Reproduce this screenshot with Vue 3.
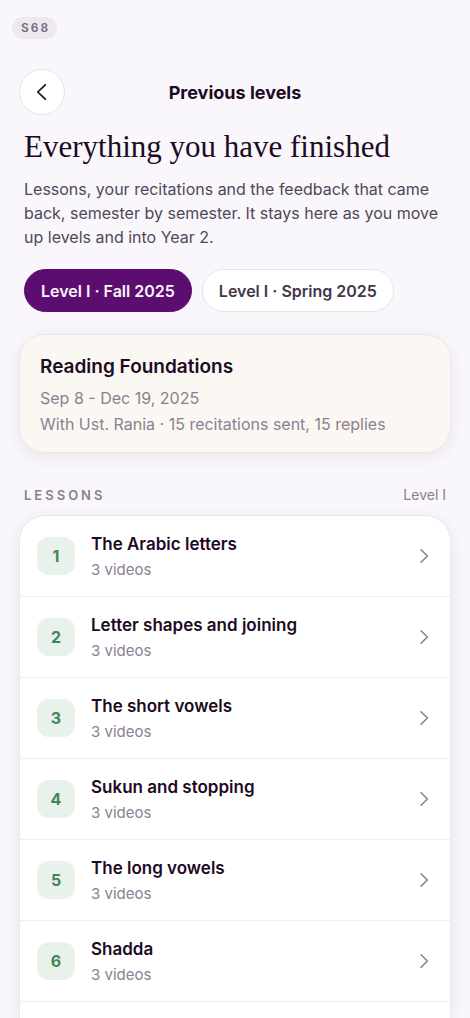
<script setup>
import { ref } from 'vue'

const terms = ['Level I · Fall 2025', 'Level I · Spring 2025']
const activeTerm = ref(terms[0])

const lessons = [
    { id: 1, title: 'The Arabic letters', videos: 3 },
    { id: 2, title: 'Letter shapes and joining', videos: 3 },
    { id: 3, title: 'The short vowels', videos: 3 },
    { id: 4, title: 'Sukun and stopping', videos: 3 },
    { id: 5, title: 'The long vowels', videos: 3 },
    { id: 6, title: 'Shadda', videos: 3 },
]
</script>

<template>
    <div class="page">
        <span class="screen-tag">S68</span>

        <header class="top-bar">
            <button type="button" class="back-btn" aria-label="Back">
                <svg width="24" height="24" viewBox="0 0 24 24" fill="none">
                    <path d="M15.3 4.8 7.8 12l7.5 7.2" stroke="currentColor" stroke-width="1.7" stroke-linecap="round"
                        stroke-linejoin="round" />
                </svg>
            </button>
            <h2>Previous levels</h2>
        </header>

        <section class="intro">
            <h1>Everything you have finished</h1>
            <p>
                Lessons, your recitations and the feedback that came back, semester by semester. It stays here as you
                move up levels and into Year 2.
            </p>
            <div class="terms">
                <button v-for="term in terms" :key="term" type="button" class="term"
                    :class="{ active: term === activeTerm }" @click="activeTerm = term">
                    {{ term }}
                </button>
            </div>
        </section>

        <section class="summary">
            <h3>Reading Foundations</h3>
            <p>Sep 8 - Dec 19, 2025</p>
            <p>With Ust. Rania · 15 recitations sent, 15 replies</p>
        </section>

        <div class="list-head">
            <h4>LESSONS</h4>
            <span>Level I</span>
        </div>

        <!-- lessons -->
        <ul class="lessons">
            <li v-for="lesson in lessons" :key="lesson.id">
                <a href="#" class="lesson">
                    <span class="number">{{ lesson.id }}</span>
                    <span class="info">
                        <strong>{{ lesson.title }}</strong>
                        <small>{{ lesson.videos }} videos</small>
                    </span>
                    <svg width="18" height="18" viewBox="0 0 18 18" fill="none">
                        <path d="m6 2.8 6.4 6.2L6 15.2" stroke="currentColor" stroke-width="1.6"
                            stroke-linecap="round" stroke-linejoin="round" />
                    </svg>
                </a>
            </li>
        </ul>
    </div>
</template>

<style>
body {
    margin: 0;
    background: #f9f7fb;
}
</style>

<style scoped>
.page {
    display: flex;
    flex-direction: column;
    box-sizing: border-box;
    min-height: 100vh;
    padding: 17px 19px 0;
    overflow: hidden;
    font-family: Inter, "Liberation Sans", sans-serif;
    color: #1d0a24;
}

h1,
h2,
h3,
h4,
p {
    margin: 0;
}

.screen-tag {
    align-self: flex-start;
    margin-left: -7px;
    padding: 0 7px 0 9px;
    border-radius: 11px;
    background: #eee9ef;
    color: #75677b;
    font-size: 12px;
    font-weight: 600;
    line-height: 22px;
    letter-spacing: 2px;
}

.top-bar {
    display: grid;
    grid-template-columns: 46px 1fr 46px;
    align-items: center;
    margin-top: 30px;
}

.top-bar h2 {
    font-size: 18px;
    font-weight: 700;
    text-align: center;
}

.back-btn {
    display: flex;
    align-items: center;
    justify-content: center;
    width: 46px;
    height: 46px;
    padding: 0;
    border: 1px solid #e8e4ea;
    border-radius: 50%;
    background: #fff;
    color: #1d0a24;
}

.intro {
    padding: 0 5px;
}

.intro h1 {
    margin-top: 12px;
    font-family: "Liberation Serif", serif;
    font-size: 31px;
    font-weight: 400;
    line-height: 40px;
}

.intro p {
    margin-top: 10px;
    color: #51465a;
    font-size: 16px;
    line-height: 24px;
}

.terms {
    display: flex;
    gap: 10px;
    margin-top: 20px;
}

.term {
    height: 43px;
    padding: 0 16px;
    border: 1px solid #e8e4ea;
    border-radius: 22px;
    background: #fff;
    color: #42364a;
    font-family: inherit;
    font-size: 16px;
    font-weight: 600;
    white-space: nowrap;
}

.term.active {
    border-color: #5b0e70;
    background: #5b0e70;
    color: #fbf5fc;
}

.summary {
    margin-top: 22px;
    padding: 20px 20px 15px;
    border: 1px solid #ebe6e8;
    border-radius: 26px;
    background: #fbf8f3;
    box-shadow: 0 4px 16px rgba(60, 20, 70, 0.08);
}

.summary h3 {
    margin-bottom: 6px;
    font-size: 19px;
    font-weight: 600;
    line-height: 24px;
}

.summary p {
    color: #8c7f92;
    font-size: 16px;
    line-height: 26px;
}

.list-head {
    display: flex;
    align-items: center;
    justify-content: space-between;
    margin-top: 32px;
    padding: 0 5px;
    color: #8c7f92;
    line-height: 20px;
}

.list-head h4 {
    font-size: 13px;
    font-weight: 600;
    letter-spacing: 3px;
}

.list-head span {
    font-size: 14px;
}

.lessons {
    flex: 1;
    margin: 10px 0 0;
    padding: 0;
    border: 1px solid #ebe6ed;
    border-bottom: 0;
    border-radius: 26px 26px 0 0;
    background: #fff;
    box-shadow: 0 4px 16px rgba(60, 20, 70, 0.08);
    list-style: none;
}

.lesson {
    display: flex;
    align-items: center;
    gap: 16px;
    height: 80px;
    padding: 0 17px;
    border-bottom: 1px solid #f0edf2;
    color: #8c7f92;
    text-decoration: none;
}

.number {
    width: 38px;
    border-radius: 12px;
    background: #e8f2eb;
    color: #438656;
    font-size: 16px;
    font-weight: 700;
    line-height: 38px;
    text-align: center;
}

.info {
    display: flex;
    flex: 1;
    flex-direction: column;
    gap: 4px;
}

.info strong {
    color: #1d0a24;
    font-size: 17px;
    font-weight: 600;
    line-height: 24px;
}

.info small {
    font-size: 15px;
    line-height: 20px;
}
</style>
